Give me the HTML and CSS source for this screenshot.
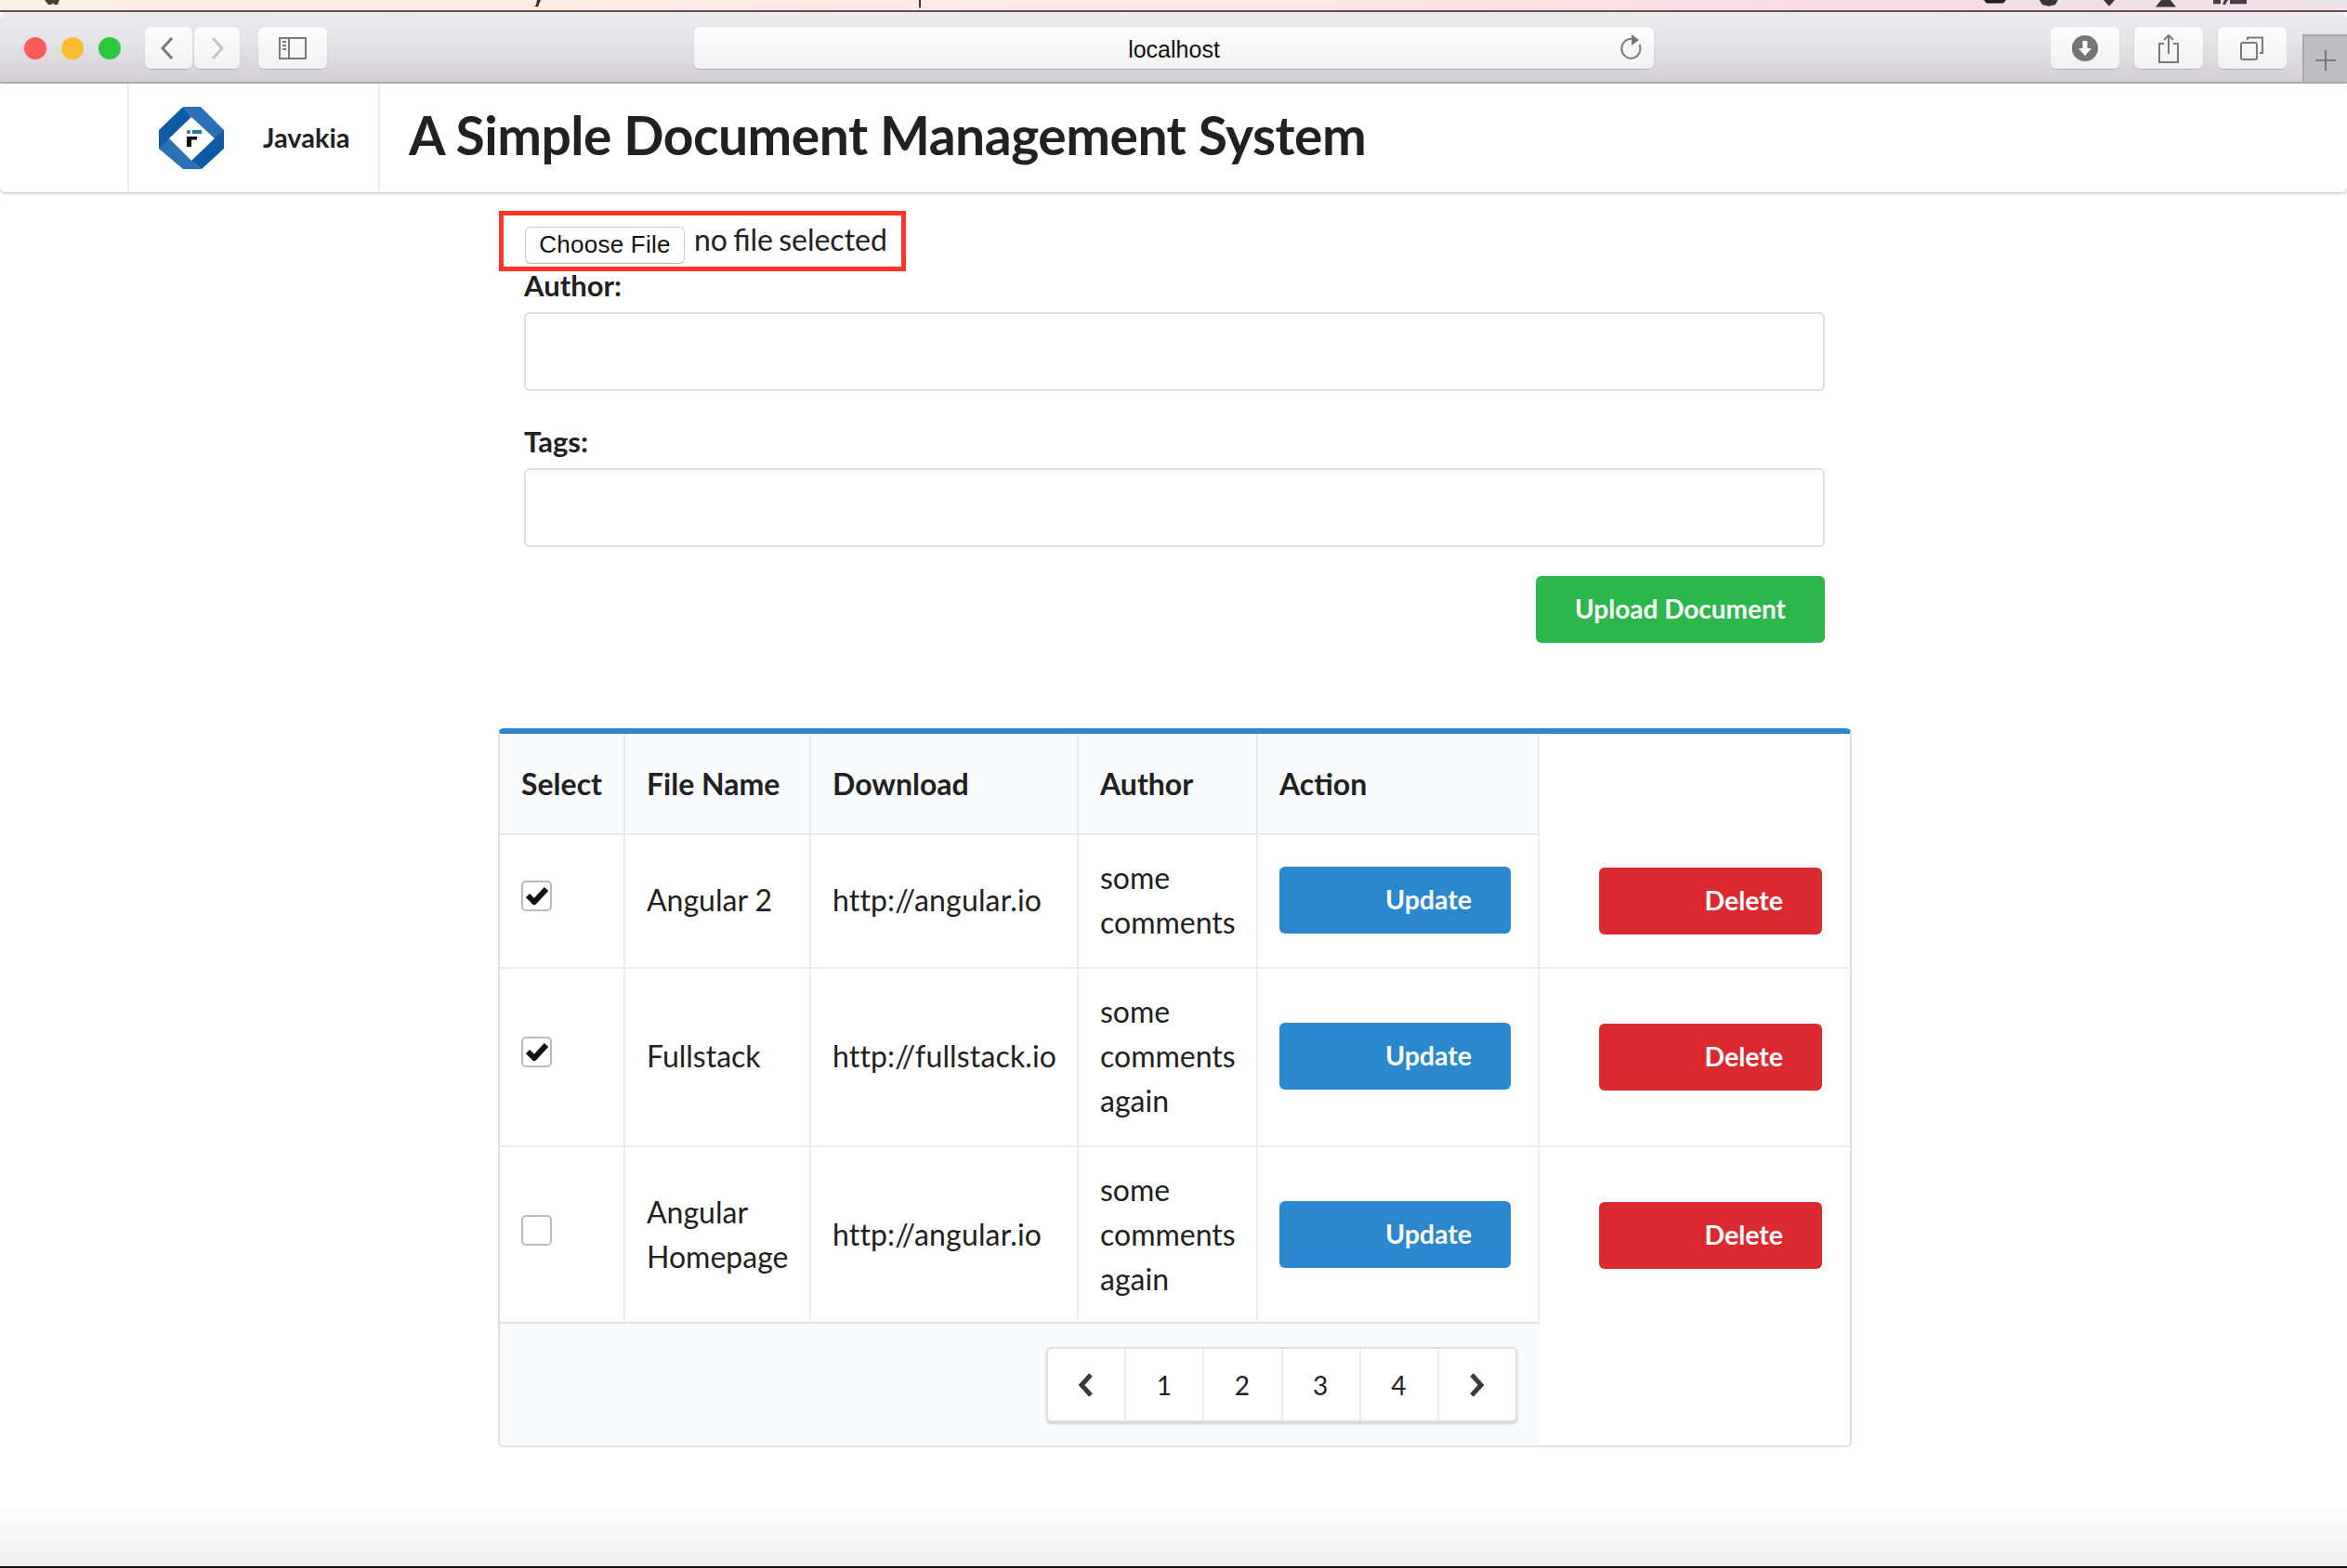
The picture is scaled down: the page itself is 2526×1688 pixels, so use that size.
FILE: index.html
```html
<!DOCTYPE html>
<html lang="en">
<head>
    <meta charset="UTF-8">
    <title>A Simple Document Management System</title>
    <link rel="stylesheet" href="styles.css">
</head>
<body>
    <!-- bottom edge of the mac menu bar -->
    <svg class="menu-strip" viewBox="0 0 2526 13" preserveAspectRatio="none">
        <path d="M48 0h16l-2 6h-3l-2-2-2 2h-3z" fill="#4a3a34"/>
        <path d="M578 0h4l-3 9-4-1 2-2z" fill="#3d3533"/>
        <rect x="989" y="0" width="2" height="10" fill="#3d3533"/>
        <path d="M2135 0h24l-3 4h-18z" fill="#221e22"/>
        <path d="M2195 0h20l-3 6-7 2-7-2z" fill="#3a343c"/>
        <path d="M2264 0h12l-6 8z" fill="#3a343c"/>
        <path d="M2326 0h10l6 9h-22z" fill="#3a343c"/>
        <path d="M2382 0h8v5h-8zM2394 0h4l-3 6h-3zM2400 0h18v5h-18z" fill="#4a3a48"/>
    </svg>

    <header class="toolbar">
        <div class="lights">
            <span class="light red"></span>
            <span class="light yellow"></span>
            <span class="light green"></span>
        </div>
        <div class="nav-btns">
            <button class="tool-btn back-btn">
                <svg width="16" height="24" viewBox="0 0 16 24"><path d="M13 1 3 12l10 11" class="line"/></svg>
            </button>
            <button class="tool-btn fwd-btn">
                <svg width="16" height="24" viewBox="0 0 16 24"><path d="M3 1l10 11L3 23" class="line faint"/></svg>
            </button>
        </div>
        <button class="tool-btn side-btn">
            <svg width="30" height="24" viewBox="0 0 30 24">
                <rect x="1" y="1" width="28" height="22" class="line thin"/>
                <path d="M11 1v22" class="line thin"/>
                <path d="M4 5h4M4 9h4M4 13h4" class="line thin"/>
            </svg>
        </button>
        <div class="address">
            <span class="address-text">localhost</span>
            <svg class="reload" width="24" height="30" viewBox="0 0 24 30">
                <path d="M15 6.500A10 10.500 0 1 0 20.500 12" class="line thin"/>
                <path d="M12 1l8 6-8 6z" fill="#777"/>
            </svg>
        </div>
        <div class="right-btns">
            <button class="tool-btn wide-btn">
                <svg width="28" height="28" viewBox="0 0 28 28">
                    <circle cx="14" cy="14" r="14" fill="#757575"/>
                    <path d="M11.500 6h5v8h4.500L14 22l-7-8h4.500z" fill="#fff"/>
                </svg>
            </button>
            <button class="tool-btn wide-btn">
                <svg width="24" height="32" viewBox="0 0 24 32">
                    <path d="M7 11H2v20h20V11h-5" class="line thin"/>
                    <path d="M12 22V2M7 7l5-5 5 5" class="line thin"/>
                </svg>
            </button>
            <button class="tool-btn wide-btn">
                <svg width="26" height="26" viewBox="0 0 26 26">
                    <rect x="1" y="7" width="17" height="18" rx="2" class="line thin"/>
                    <path d="M8 4V1.500h16V18h-3" class="line thin"/>
                </svg>
            </button>
        </div>
        <div class="new-tab">
            <svg width="24" height="24" viewBox="0 0 24 24"><path d="M12 1v22M1 12h22" class="line thin"/></svg>
        </div>
    </header>

    <nav class="topnav">
        <div class="nav-cell nav-blank"></div>
        <div class="nav-cell nav-brand">
            <svg class="logo" width="70" height="67" viewBox="11 10 70 67">
                <path d="M37 10h19l25 25v6l-10 3-25-23z" fill="#2a70b5"/>
                <path d="M81 35v20L57 77 46 68l25-24z" fill="#0f5aa5"/>
                <path d="M11 50l11-6 24 24 11 9H37L11 55z" fill="#2a70b5"/>
                <path d="M37 10l9 11-24 23-11 11V35z" fill="#0f5aa5"/>
                <rect x="41" y="35" width="4" height="4" rx="1.500" fill="#2a7fc0"/>
                <rect x="47" y="35" width="10" height="4" fill="#1f7a93"/>
                <path d="M41 42h11v3.500h-6V53h-5z" fill="#111"/>
            </svg>
            <span class="brand-name">Javakia</span>
        </div>
        <h1 class="page-title">A Simple Document Management System</h1>
    </nav>

    <main class="content">
        <form class="upload-form">
            <div class="file-field">
                <button type="button" class="file-btn">Choose File</button>
                <span class="file-name">no file selected</span>
            </div>
            <label class="field-label">Author:</label>
            <input type="text" class="field-input">
            <label class="field-label tags-label">Tags:</label>
            <input type="text" class="field-input">
            <div class="upload-row">
                <button type="button" class="btn btn-green upload-btn">Upload Document</button>
            </div>
        </form>

        <div class="card">
            <table class="doc-table">
                <colgroup>
                    <col class="col-select">
                    <col class="col-name">
                    <col class="col-link">
                    <col class="col-author">
                    <col class="col-update">
                    <col class="col-delete">
                </colgroup>
                <thead>
                    <tr>
                        <th>Select</th>
                        <th>File Name</th>
                        <th>Download</th>
                        <th>Author</th>
                        <th>Action</th>
                    </tr>
                </thead>
                <tbody>
                    <tr>
                        <td><span class="check"><svg width="24" height="19" viewBox="0 0 24 19"><path d="M2 9l7 7L22 2" class="tick"/></svg></span></td>
                        <td>Angular 2</td>
                        <td class="link-cell">http://angular.io</td>
                        <td>some comments</td>
                        <td><button class="btn btn-blue update-btn">Update</button></td>
                        <td class="delete-cell"><button class="btn btn-red delete-btn">Delete</button></td>
                    </tr>
                    <tr>
                        <td><span class="check"><svg width="24" height="19" viewBox="0 0 24 19"><path d="M2 9l7 7L22 2" class="tick"/></svg></span></td>
                        <td>Fullstack</td>
                        <td class="link-cell">http://fullstack.io</td>
                        <td>some comments again</td>
                        <td><button class="btn btn-blue update-btn">Update</button></td>
                        <td class="delete-cell"><button class="btn btn-red delete-btn">Delete</button></td>
                    </tr>
                    <tr class="last-row">
                        <td><span class="check"></span></td>
                        <td>Angular Homepage</td>
                        <td class="link-cell">http://angular.io</td>
                        <td>some comments again</td>
                        <td><button class="btn btn-blue update-btn">Update</button></td>
                        <td class="delete-cell"><button class="btn btn-red delete-btn">Delete</button></td>
                    </tr>
                </tbody>
                <tfoot>
                    <tr>
                        <td colspan="5" class="foot-cell">
                            <div class="pager">
                                <a class="page-item"><svg width="18" height="26" viewBox="0 0 18 26"><path d="M14 2 4 13l10 11" class="chev"/></svg></a>
                                <a class="page-item">1</a>
                                <a class="page-item">2</a>
                                <a class="page-item">3</a>
                                <a class="page-item">4</a>
                                <a class="page-item"><svg width="18" height="26" viewBox="0 0 18 26"><path d="M4 2l10 11L4 24" class="chev"/></svg></a>
                            </div>
                        </td>
                    </tr>
                </tfoot>
            </table>
        </div>
    </main>

    <div class="window-fade"></div>
</body>
</html>
```

FILE: styles.css
```css
* {
    box-sizing: border-box;
}

html, body {
    margin: 0;
    height: 100%;
}

body {
    display: flex;
    flex-direction: column;
    height: 100vh;
    overflow: hidden;
    background-color: white;
    font-family: Lato, "Open Sans", sans-serif;
    font-size: 32px;
    line-height: 48px;
    color: #212121;
}

/* browser chrome */
.menu-strip {
    display: block;
    flex: none;
    width: 100%;
    height: 13px;
    background: linear-gradient(90deg, #fbefe3, #fdeae4 30%, #ffe7e6 55%, #fbdde5 75%, #efdfe9 90%, #f0e2ea);
    border-bottom: 2px solid #6d4a50;
}

.toolbar {
    flex: none;
    display: flex;
    align-items: center;
    height: 77px;
    padding: 2px 0 0 26px;
    background: linear-gradient(#edecef, #e5e4e7 40%, #d2d0d3);
    border-bottom: 2px solid #a9a8aa;
    border-radius: 8px 8px 0 0;
}

.lights {
    display: flex;
    gap: 16px;
    margin-right: 26px;
}

.light {
    width: 24px;
    height: 24px;
    border-radius: 50%;
}

.red { background-color: #fc5d58; }
.yellow { background-color: #fdbb2f; }
.green { background-color: #2ec840; }

.tool-btn {
    display: flex;
    align-items: center;
    justify-content: center;
    height: 45px;
    padding: 0;
    background: linear-gradient(#fdfdfd, #f1f1f1);
    border: none;
    border-radius: 6px;
    box-shadow: 0 1px 1px #b5b4b6, 0 0 1px #c4c3c5;
}

.nav-btns {
    display: flex;
    gap: 2px;
    margin-right: 20px;
}

.back-btn { width: 51px; padding-right: 3px; }
.fwd-btn { width: 49px; }
.side-btn { width: 74px; }

.line {
    fill: none;
    stroke: #7a7a7a;
    stroke-width: 3;
}

.line.faint { stroke: #c4c4c4; }
.line.thin { stroke-width: 2; }

.address {
    display: flex;
    align-items: center;
    position: relative;
    justify-content: center;
    width: 1033px;
    height: 45px;
    margin-left: 395px;
    background: linear-gradient(#fefefe, #f1f1f1);
    border-radius: 6px;
    box-shadow: 0 1px 1px #b5b4b6, 0 0 1px #c4c3c5;
}

.address-text {
    padding-top: 2px;
    font-family: "Liberation Sans", Arial, sans-serif;
    font-size: 25px;
    line-height: 30px;
    color: #111;
}

.reload {
    position: absolute;
    right: 12px;
    top: 7px;
}

.right-btns {
    display: flex;
    gap: 16px;
    margin-left: 427px;
    margin-right: 17px;
}

.wide-btn { width: 74px; }

.new-tab {
    display: flex;
    align-items: center;
    justify-content: center;
    align-self: flex-end;
    flex: 1;
    height: 51px;
    padding-top: 2px;
    background-color: #bebdbf;
    border-top: 2px solid #a9a8aa;
    border-left: 2px solid #a9a8aa;
}

/* page header */
.topnav {
    flex: none;
    display: flex;
    align-items: stretch;
    height: 116px;
    margin-top: 1px;
    border-radius: 6px;
    box-shadow: 0 1px 3px rgba(0,0,0,0.3);
}

.nav-cell {
    display: flex;
    align-items: center;
    border-right: 2px solid #ececec;
}

.nav-blank {
    width: 139px;
}

.nav-brand {
    width: 270px;
    padding: 0 0 2px 32px;
}

.logo {
    flex: none;
}

.brand-name {
    margin-left: 42px;
    font-size: 29px;
    font-weight: 700;
}

.page-title {
    margin: 0 0 0 31px;
    padding-bottom: 8px;
    align-self: center;
    font-size: 57px;
    line-height: 64px;
    font-weight: 700;
    letter-spacing: -0.5px;
}

/* upload form */
.content {
    flex: 1;
    width: 1457px;
    margin-left: 536px;
    padding-top: 20px;
}

.upload-form {
    padding: 0 29px 0 28px;
}

.file-field {
    display: flex;
    align-items: center;
    width: 438px;
    height: 65px;
    margin-left: -27px;
    padding-left: 23px;
    border: 5px solid #ff3527;
}

.file-btn {
    width: 172px;
    height: 40px;
    margin-top: 8px;
    padding: 0;
    background-color: white;
    border: 1px solid #ccc;
    border-bottom-color: #b4b4b4;
    border-radius: 6px;
    font-family: "Liberation Sans", Arial, sans-serif;
    font-size: 26px;
    letter-spacing: 0.25px;
    color: #111;
}

.file-name {
    margin-left: 10px;
    margin-top: -4px;
    word-spacing: -2px;
}

.field-label {
    display: block;
    margin-bottom: 14px;
    font-size: 31px;
    font-weight: 700;
    line-height: 30px;
}

.tags-label {
    margin-top: 39px;
}

.field-input {
    display: block;
    width: 100%;
    height: 85px;
    background-color: white;
    border: 2px solid #dedede;
    border-radius: 6px;
}

.upload-row {
    display: flex;
    justify-content: flex-end;
    margin-top: 31px;
}

.btn {
    height: 72px;
    padding: 0 0 2px;
    border: none;
    border-radius: 6px;
    font-family: Lato, sans-serif;
    font-size: 28.5px;
    font-weight: 700;
    color: white;
}

.btn-green { background-color: #2cb74d; }
.btn-blue { background-color: #2b87ce; }
.btn-red { background-color: #da2a30; }

.upload-btn {
    width: 311px;
    font-size: 28px;
}

/* documents table */
.card {
    height: 774px;
    margin-top: 92px;
    background-color: white;
    border: 2px solid #e0e0e1;
    border-top: 6px solid #2b87ce;
    border-radius: 6px;
    overflow: hidden;
}

.doc-table {
    width: 100%;
    table-layout: fixed;
    border-collapse: separate;
    border-spacing: 0;
}

.col-select { width: 135px; }
.col-name { width: 200px; }
.col-link { width: 288px; }
.col-author { width: 193px; }
.col-update { width: 303px; }

.doc-table th {
    padding: 30px 0 29px 23px;
    background-color: #f9fafb;
    border-right: 2px solid #e8e9ea;
    border-bottom: 2px solid #e8e9ea;
    font-weight: 700;
    text-align: left;
}

.doc-table td {
    padding: 22px 0 24px 23px;
    border-right: 2px solid #ececed;
    border-bottom: 2px solid #ececed;
}

.doc-table td.link-cell {
    letter-spacing: 0.15px;
}

.doc-table td.delete-cell {
    padding: 0 30px 0 0;
    border-right: none;
}

.doc-table .last-row td {
    border-bottom-color: #dedfe0;
    padding-top: 22px;
    padding-bottom: 22px;
}

.doc-table .last-row td.delete-cell {
    border-bottom: none;
    padding: 0 30px 0 0;
}

.doc-table td.foot-cell {
    padding: 25px 24px 24px 0;
    background-color: #f9fafb;
    border: none;
}

.check {
    display: flex;
    align-items: center;
    justify-content: center;
    width: 33px;
    height: 33px;
    margin-bottom: 10px;
    background-color: white;
    border: 2px solid #bcbcbc;
    border-radius: 5px;
}

.tick {
    fill: none;
    stroke: #111;
    stroke-width: 6;
}

.update-btn {
    display: block;
    width: 249px;
    padding-right: 42px;
    text-align: right;
}

.delete-btn {
    display: block;
    width: 240px;
    margin-left: auto;
    padding-right: 42px;
    text-align: right;
}

.pager {
    display: flex;
    width: 507px;
    height: 81px;
    margin-left: auto;
    background-color: white;
    border: 2px solid #e0e0e1;
    border-radius: 6px;
    box-shadow: 0 2px 3px rgba(0,0,0,0.18);
}

.page-item {
    flex: 1;
    display: flex;
    align-items: center;
    justify-content: center;
    padding-right: 1px;
    border-right: 2px solid #ececed;
    font-size: 28px;
}

.page-item:last-child {
    border-right: none;
}

.chev {
    fill: none;
    stroke: #3a3a3a;
    stroke-width: 5;
}

/* the window's rounded foot fading into the desktop */
.window-fade {
    flex: none;
    height: 68px;
    background: linear-gradient(white, #eeeeee);
    border-bottom: 2px solid #111;
}
```
